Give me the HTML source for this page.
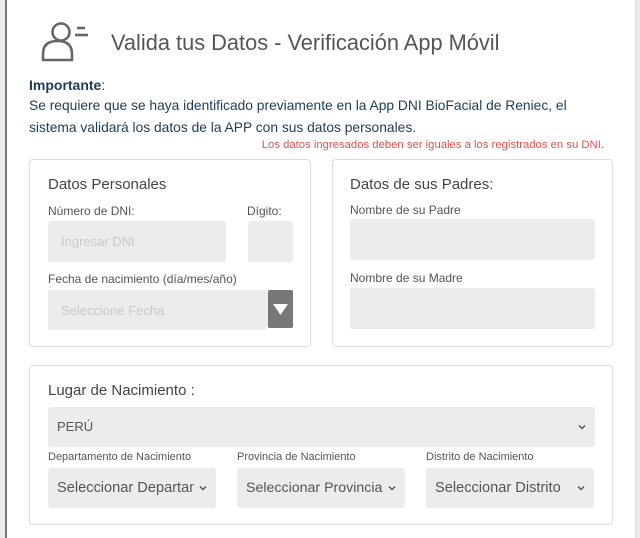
<!DOCTYPE html>
<html><head><meta charset="utf-8"><style>
*{margin:0;padding:0;box-sizing:border-box}
body{width:640px;height:538px;background:#ececec;position:relative;overflow:hidden;font-family:"Liberation Sans",Arial,sans-serif}
.a{position:absolute}
.panel{left:5px;top:0;width:631px;height:538px;background:#fff;border-left:2px solid #777;border-right:1px solid #d8d8d8}
.box{position:absolute;border:1px solid #ddd;border-radius:4px;background:#fff}
.in{position:absolute;background:#ececec;border-radius:3px}
.lbl{position:absolute;font-size:12px;color:#555}
.h{position:absolute;font-size:15px;color:#444}
.ph{position:absolute;font-size:13px;color:#c8c8c8}
.sel{position:absolute;background:#ececec;border-radius:3px;font-size:14.6px;color:#555;line-height:40px;padding-left:9px;white-space:nowrap;overflow:hidden}
.chev{position:absolute;right:9px;top:17px;width:8px;height:6px}
.mask{position:absolute;right:0;top:0;width:22px;height:40px;background:#ececec}
</style></head><body>
<div class="a panel"></div>
<svg class="a" style="left:38px;top:16px" width="56" height="50" viewBox="38 16 56 50">
<circle cx="61" cy="32" r="8.5" fill="none" stroke="#666" stroke-width="2.6"/>
<path d="M43 60 L43 54 Q43 41 57.5 41 Q72 41 72 54 L72 60 Z" fill="none" stroke="#666" stroke-width="2.6" stroke-linejoin="round"/>
<line x1="77" y1="28" x2="85" y2="28" stroke="#666" stroke-width="2.6"/>
<line x1="75" y1="35" x2="88" y2="35" stroke="#666" stroke-width="2.6"/>
</svg>
<div class="a" style="left:111px;top:30px;font-size:21.8px;color:#555">Valida tus Datos - Verificación App Móvil</div>
<div class="a" style="left:29px;top:77px;font-size:14px;color:#1d3c5a"><b>Importante</b>:</div>
<div class="a" style="left:29px;top:95px;font-size:13.8px;line-height:22px;color:#1d3c5a;width:560px">Se requiere que se haya identificado previamente en la App DNI BioFacial de Reniec, el sistema validará los datos de la APP con sus datos personales.</div>
<div class="a" style="right:36px;top:139px;font-size:11.3px;color:#d9534f">Los datos ingresados deben ser iguales a los registrados en su DNI.</div>

<div class="box" style="left:29px;top:159px;width:282px;height:188px"></div>
<div class="h" style="left:48px;top:176px">Datos Personales</div>
<div class="lbl" style="left:48px;top:204px">Número de DNI:</div>
<div class="lbl" style="left:247px;top:204px">Dígito:</div>
<div class="in" style="left:48px;top:221px;width:178px;height:41px"></div>
<div class="ph" style="left:61px;top:234px">Ingresar DNI</div>
<div class="in" style="left:248px;top:221px;width:45px;height:41px"></div>
<div class="lbl" style="left:48px;top:272px">Fecha de nacimiento (día/mes/año)</div>
<div class="in" style="left:48px;top:290px;width:220px;height:40px"></div>
<div class="ph" style="left:61px;top:303px">Seleccione Fecha</div>
<div class="a" style="left:268px;top:290px;width:25px;height:38px;background:#777;border-radius:2px"></div>
<svg class="a" style="left:272px;top:303px" width="17" height="13"><path d="M1 1 L16 1 L8.5 12 Z" fill="#fff"/></svg>

<div class="box" style="left:332px;top:159px;width:281px;height:188px"></div>
<div class="h" style="left:350px;top:176px">Datos de sus Padres:</div>
<div class="lbl" style="left:350px;top:203px">Nombre de su Padre</div>
<div class="in" style="left:350px;top:219px;width:245px;height:41px"></div>
<div class="lbl" style="left:350px;top:271px">Nombre de su Madre</div>
<div class="in" style="left:350px;top:288px;width:245px;height:41px"></div>

<div class="box" style="left:29px;top:365px;width:584px;height:160px"></div>
<div class="h" style="left:48px;top:382px">Lugar de Nacimiento :</div>
<div class="sel" style="left:48px;top:407px;width:547px;font-size:13px">PERÚ<svg class="chev" viewBox="0 0 8 6"><path d="M1 1.5 L4 4.5 L7 1.5" fill="none" stroke="#555" stroke-width="1.4"/></svg></div>
<div class="lbl" style="left:48px;top:451px;font-size:11px">Departamento de Nacimiento</div>
<div class="lbl" style="left:237px;top:451px;font-size:11px">Provincia de Nacimiento</div>
<div class="lbl" style="left:426px;top:451px;font-size:11px">Distrito de Nacimiento</div>
<div class="sel" style="left:48px;top:468px;width:168px">Seleccionar Departam<div class="mask"></div><svg class="chev" viewBox="0 0 8 6"><path d="M1 1.5 L4 4.5 L7 1.5" fill="none" stroke="#555" stroke-width="1.4"/></svg></div>
<div class="sel" style="left:237px;top:468px;width:168px;font-size:14.2px">Seleccionar Provincia<div class="mask" style="width:20px"></div><svg class="chev" viewBox="0 0 8 6"><path d="M1 1.5 L4 4.5 L7 1.5" fill="none" stroke="#555" stroke-width="1.4"/></svg></div>
<div class="sel" style="left:426px;top:468px;width:168px">Seleccionar Distrito<svg class="chev" viewBox="0 0 8 6"><path d="M1 1.5 L4 4.5 L7 1.5" fill="none" stroke="#555" stroke-width="1.4"/></svg></div>
</body></html>
